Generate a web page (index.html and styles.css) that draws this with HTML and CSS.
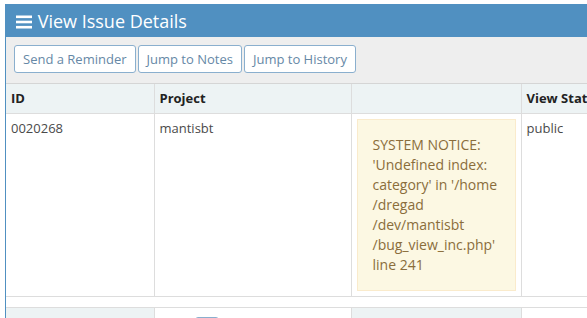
FILE: index.html
```html
<!DOCTYPE html>
<html>
<head>
    <title>View Issue Details</title>
    <link rel="stylesheet" href="styles.css">
</head>
<body>
    <div class="widget">
        <div class="widget-header">
            <h4 class="widget-title">
                <svg class="icon-bars" width="16" height="14" viewBox="0 0 16 14">
                    <rect x="0" y="0.5" width="16" height="2.6" fill="#fff"/>
                    <rect x="0" y="5.7" width="16" height="2.6" fill="#fff"/>
                    <rect x="0" y="10.9" width="16" height="2.6" fill="#fff"/>
                </svg>
                View Issue Details
            </h4>
        </div>
        <div class="widget-toolbox">
            <a class="btn" href="#">Send a Reminder</a>
            <a class="btn" href="#">Jump to Notes</a>
            <a class="btn" href="#">Jump to History</a>
        </div>
        <table class="bug-view">
            <colgroup>
                <col class="c1">
                <col class="c2">
                <col class="c3">
                <col class="c4">
            </colgroup>
            <thead>
                <tr>
                    <th>ID</th>
                    <th>Project</th>
                    <th></th>
                    <th>View Status</th>
                </tr>
            </thead>
            <tbody>
                <tr>
                    <td>0020268</td>
                    <td>mantisbt</td>
                    <td>
                        <div class="alert">SYSTEM NOTICE: 'Undefined index: category' in '/home /dregad /dev/mantisbt /bug_view_inc.php' line 241</div>
                    </td>
                    <td>public</td>
                </tr>
                <tr class="spacer">
                    <td colspan="4"></td>
                </tr>
                <tr>
                    <th class="label">Reporter</th>
                    <td><span class="avatar"></span></td>
                    <th class="label">Assigned To</th>
                    <td></td>
                </tr>
            </tbody>
        </table>
    </div>
</body>
</html>
```

FILE: styles.css
```css
html, body {
    overflow: hidden;
}

body {
    margin: 0;
    padding: 4px 0 0 5px;
    font-family: "Open Sans", sans-serif;
    font-size: 13px;
    color: #393939;
}

.widget {
    width: 700px;
    border: 1px solid #5090c1;
    border-bottom: none;
}

.widget-header {
    background-color: #5090c1;
    color: #fff;
    height: 32px;
    padding-left: 10px;
}

.widget-title {
    margin: 0;
    font-size: 18px;
    font-weight: normal;
    line-height: 32px;
}

.icon-bars {
    vertical-align: -1px;
    margin-right: 1px;
}

.widget-toolbox {
    background-color: #eee;
    padding: 8px 8px 10px;
    border-bottom: 1px solid #d5d5d5;
    display: flex;
    gap: 2px;
}

.btn {
    display: block;
    padding: 4px 8px;
    line-height: 18px;
    font-size: 13px;
    color: #6688a6;
    background-color: #fff;
    border: 1px solid #8aafce;
    border-radius: 3px;
    text-decoration: none;
}

.bug-view {
    border-collapse: collapse;
    table-layout: fixed;
    width: 700px;
}

.c1 { width: 148px; }
.c2 { width: 197px; }
.c3 { width: 170px; }
.c4 { width: 185px; }

.bug-view th,
.bug-view td {
    border: 1px solid #ddd;
    padding: 5px;
    line-height: 18.5px;
    text-align: left;
    vertical-align: top;
}

.bug-view tr > :first-child {
    border-left: none;
}

.bug-view thead th,
.bug-view th.label {
    background-color: #edf3f4;
    font-weight: bold;
    color: #222;
    white-space: nowrap;
    overflow: hidden;
}

.bug-view th.label {
    padding-top: 7px;
}

.bug-view td {
    color: #4a4a4a;
}

.bug-view thead tr th {
    border-top: none;
}

.spacer td {
    height: 10px;
    padding: 0;
}

.alert {
    background-color: #fcf8e3;
    border: 1px solid #faebcc;
    color: #8a6d3b;
    font-size: 14px;
    line-height: 20px;
    padding: 15px;
}

.avatar {
    display: block;
    margin: 4px 0 0 35px;
    width: 22px;
    height: 22px;
    border: 1px solid #8aafce;
    border-radius: 3px;
}
```
